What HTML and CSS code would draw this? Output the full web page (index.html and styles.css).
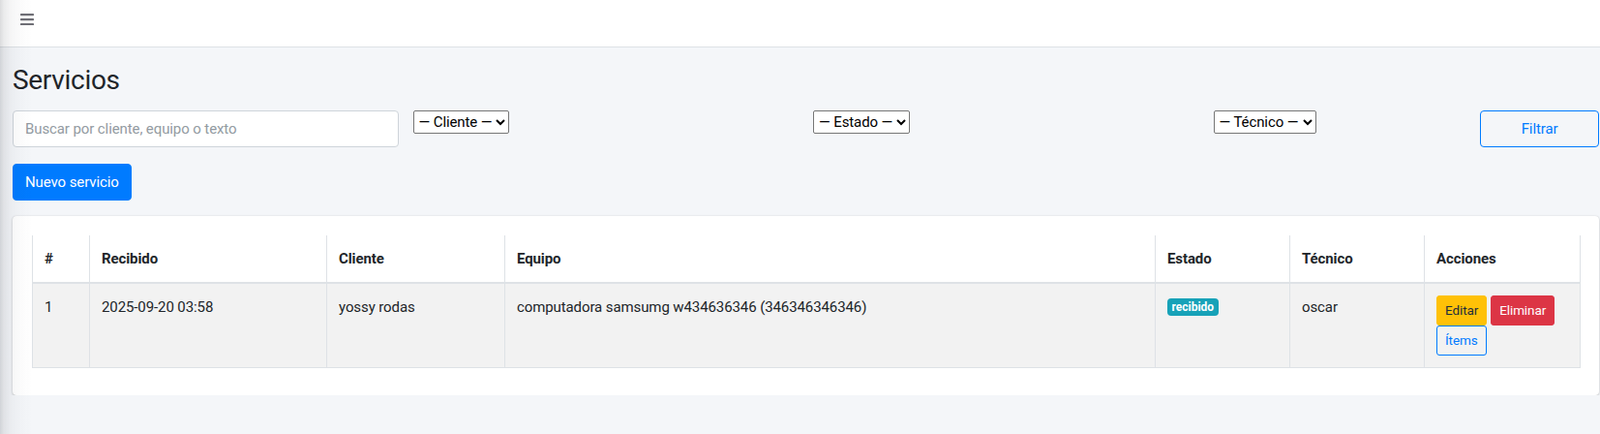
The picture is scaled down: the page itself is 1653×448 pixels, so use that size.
FILE: index.html
```html
<!DOCTYPE html>
<html lang="es">
<head>
<meta charset="utf-8">
<title>Servicios</title>
<link rel="stylesheet" href="styles.css">
</head>
<body>
<div class="side-shadow"></div>
<nav class="navbar">
  <a class="nav-toggle" href="#" aria-label="Menú">
    <svg width="14" height="12" viewBox="0 0 14 12" aria-hidden="true">
      <rect x="0" y="0" width="14" height="2.2" rx="0.6" fill="#6f6f76"/>
      <rect x="0" y="5" width="14" height="2.2" rx="0.6" fill="#6f6f76"/>
      <rect x="0" y="10" width="14" height="2.2" rx="0.6" fill="#6f6f76"/>
    </svg>
  </a>
</nav>
<main class="content">
  <h1 class="page-title">Servicios</h1>
  <form class="filters">
    <input class="form-control span-3" type="text" placeholder="Buscar por cliente, equipo o texto">
    <div class="span-3"><select class="filter-select"><option>— Cliente —</option></select></div>
    <div class="span-3"><select class="filter-select"><option>— Estado —</option></select></div>
    <div class="span-2"><select class="filter-select"><option>— Técnico —</option></select></div>
    <button class="btn btn-outline-primary span-1" type="button">Filtrar</button>
  </form>
  <div class="actions-bar">
    <a class="btn btn-primary" href="#">Nuevo servicio</a>
  </div>
  <section class="card">
    <table class="table">
      <colgroup>
        <col class="c-num"><col class="c-rec"><col class="c-cli"><col class="c-eq"><col class="c-est"><col class="c-tec"><col class="c-acc">
      </colgroup>
      <thead>
        <tr><th>#</th><th>Recibido</th><th>Cliente</th><th>Equipo</th><th>Estado</th><th>Técnico</th><th>Acciones</th></tr>
      </thead>
      <tbody>
        <tr>
          <td>1</td>
          <td>2025-09-20 03:58</td>
          <td>yossy rodas</td>
          <td>computadora samsumg w434636346 (346346346346)</td>
          <td><span class="badge">recibido</span></td>
          <td>oscar</td>
          <td>
            <div class="row-actions">
              <a class="btn btn-sm btn-warning" href="#">Editar</a>
              <a class="btn btn-sm btn-danger" href="#">Eliminar</a>
              <a class="btn btn-sm btn-outline-primary" href="#">Ítems</a>
            </div>
          </td>
        </tr>
      </tbody>
    </table>
  </section>
</main>
</body>
</html>
```
FILE: styles.css
```css
* { box-sizing: border-box; }
html, body { margin: 0; padding: 0; }
body {
  font-family: Roboto, "Liberation Sans", sans-serif;
  font-size: 15px;
  line-height: 24px;
  letter-spacing: -0.1px;
  color: #212529;
  background: #f4f6f9;
  overflow-x: hidden;
}
.side-shadow {
  position: fixed;
  left: 0; top: 0; bottom: 0;
  width: 34px;
  background: linear-gradient(to right, rgba(30,35,45,.16) 0, rgba(30,35,45,.09) 4px, rgba(30,35,45,.04) 12px, rgba(30,35,45,.015) 22px, rgba(30,35,45,0) 34px);
  pointer-events: none;
  z-index: 10;
}
.navbar {
  height: 49px;
  background: #fff;
  border-bottom: 1px solid #dee2e6;
  padding: 14px 0 0 21px;
}
.nav-toggle { display: block; width: 14px; height: 12px; line-height: 0; }
.content {
  margin-left: 13px;
  width: 1639px;
}
.page-title {
  margin: 0;
  padding-top: 17px;
  font-size: 28px;
  line-height: 34px;
  font-weight: 400;
  letter-spacing: -0.3px;
  color: #212529;
}
.filters {
  margin: 14px 0 0;
  display: grid;
  grid-template-columns: repeat(12, 1fr);
  column-gap: 15px;
  align-items: start;
}
.span-1 { grid-column: span 1; }
.span-2 { grid-column: span 2; }
.span-3 { grid-column: span 3; }
.form-control {
  display: block;
  width: 100%;
  height: 38px;
  padding: 6px 12px;
  font: inherit;
  letter-spacing: inherit;
  color: #495057;
  background: #fff;
  border: 1px solid #ced4da;
  border-radius: 4px;
}
.form-control::placeholder { color: #939ba2; opacity: 1; }
.filter-select {
  font: inherit;
  letter-spacing: inherit;
  height: 24px;
  line-height: 22px;
  color: #000;
  background: #fff;
  border: 1px solid #767676;
  border-radius: 2px;
  padding: 0 0 0 1px;
}
.btn {
  display: inline-block;
  font: inherit;
  letter-spacing: inherit;
  text-align: center;
  text-decoration: none;
  border: 1px solid transparent;
  border-radius: 4px;
  padding: 6px 12px;
  line-height: 24px;
  cursor: pointer;
  background: transparent;
}
.btn-primary { background: #007bff; border-color: #007bff; color: #fff; }
.btn-outline-primary { border-color: #007bff; color: #007bff; background: transparent; }
.filters .btn { width: 100%; height: 38px; }
.actions-bar { margin-top: 17px; }
.actions-bar .btn { height: 38px; }
.card {
  margin-top: 16px;
  background: #fff;
  border-radius: 4px;
  box-shadow: 0 0 1px rgba(0,0,0,.125), 0 1px 3px rgba(0,0,0,.2);
  padding: 20px 20px 28px;
}
.table {
  width: 100%;
  table-layout: fixed;
  border-collapse: collapse;
  color: #212529;
}
.c-num { width: 59px; }
.c-rec { width: 245px; }
.c-cli { width: 184px; }
.c-eq { width: 672px; }
.c-est { width: 139px; }
.c-tec { width: 139px; }
.c-acc { width: 161px; }
.table th, .table td {
  border: 1px solid #dee2e6;
  padding: 12px;
  text-align: left;
  vertical-align: top;
}
.table th {
  border-top: 0;
  border-bottom: 2px solid #dee2e6;
  font-weight: 700;
  vertical-align: bottom;
}
.table tbody tr { background: #f2f2f2; }
.badge {
  display: inline-block;
  font-size: 12px;
  font-weight: 700;
  line-height: 1;
  letter-spacing: 0;
  padding: 3px 4.5px;
  color: #fff;
  background: #17a2b8;
  border-radius: 4px;
  vertical-align: 1px;
}
.row-actions {
  display: flex;
  flex-wrap: wrap;
  column-gap: 4px;
}
.btn-sm {
  font-size: 13.5px;
  line-height: 21px;
  padding: 4px 8px;
  border-radius: 3px;
}
.btn-warning { background: #ffc107; border-color: #ffc107; color: #1f2d3d; }
.btn-danger { background: #dc3545; border-color: #dc3545; color: #fff; }
```
